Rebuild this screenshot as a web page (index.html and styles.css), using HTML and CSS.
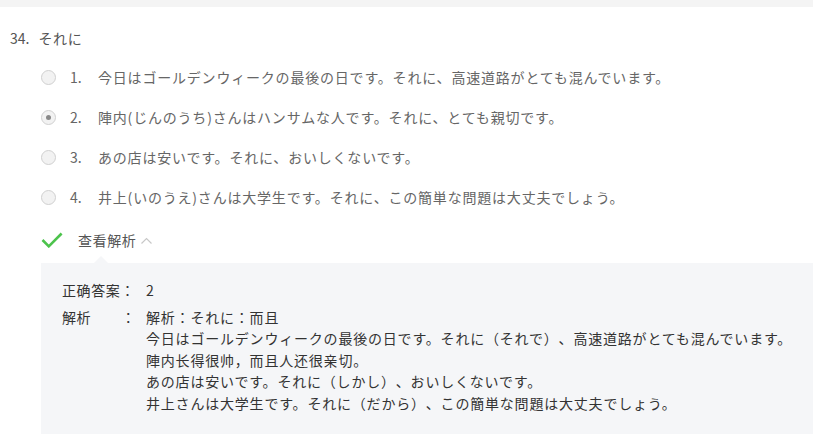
FILE: index.html
```html
<!DOCTYPE html>
<html lang="ja">
<head>
  <meta charset="UTF-8">
  <meta name="viewport" content="width=device-width, initial-scale=1.0">
  <title>それに</title>
  <link rel="stylesheet" href="styles.css">
</head>
<body>
  <div class="top-bar"></div>

  <div class="question">
    <div class="question-title"><span class="question-no">34.</span><span class="question-word">それに</span></div>

    <ul class="options">
      <li class="option">
        <span class="radio"></span>
        <span class="option-no">1.</span>
        <span class="option-text">今日はゴールデンウィークの最後の日です。それに、高速道路がとても混んでいます。</span>
      </li>
      <li class="option">
        <span class="radio checked"></span>
        <span class="option-no">2.</span>
        <span class="option-text">陣内(じんのうち)さんはハンサムな人です。それに、とても親切です。</span>
      </li>
      <li class="option">
        <span class="radio"></span>
        <span class="option-no">3.</span>
        <span class="option-text">あの店は安いです。それに、おいしくないです。</span>
      </li>
      <li class="option">
        <span class="radio"></span>
        <span class="option-no">4.</span>
        <span class="option-text">井上(いのうえ)さんは大学生です。それに、この簡単な問題は大丈夫でしょう。</span>
      </li>
    </ul>

    <div class="analysis-toggle">
      <svg class="check-icon" width="22" height="16" viewBox="0 0 22 16">
        <path d="M1.5 8 L7.8 14.3 L20.6 1.5" fill="none" stroke="#4cc34c" stroke-width="2.6"/>
      </svg>
      <span class="toggle-label">查看解析</span>
      <svg class="chevron" width="11" height="7" viewBox="0 0 11 7">
        <path d="M0.5 6.5 L5.5 1.5 L10.5 6.5" fill="none" stroke="#c8c8c8" stroke-width="1.2"/>
      </svg>
    </div>

    <div class="analysis">
      <div class="analysis-row">
        <span class="analysis-key">正确答案：</span>
        <span class="analysis-value">2</span>
      </div>
      <div class="analysis-row">
        <span class="analysis-key">解析<span class="colon">：</span></span>
        <div class="analysis-value">
          解析：それに：而且<br>
          今日はゴールデンウィークの最後の日です。それに（それで）、高速道路がとても混んでいます。<br>
          陣内长得很帅，而且人还很亲切。<br>
          あの店は安いです。それに（しかし）、おいしくないです。<br>
          井上さんは大学生です。それに（だから）、この簡単な問題は大丈夫でしょう。
        </div>
      </div>
    </div>
  </div>
</body>
</html>
```

FILE: styles.css
```css
body, html {
  margin: 0;
  padding: 0;
  background: #fff;
  font-family: "Noto Sans CJK SC", "Noto Sans", sans-serif;
  font-size: 14px;
  color: #333;
  text-spacing-trim: space-all;
}

.top-bar {
  height: 7px;
  background-color: #f4f4f4;
}

.question {
  padding: 20px 0 0 10px;
}

.question-title {
  color: #555;
  line-height: 22px;
}

.question-word {
  margin-left: 9px;
  letter-spacing: 0.6px;
}

.options {
  list-style: none;
  margin: 0;
  padding: 8px 0 0 31px;
}

.option {
  display: flex;
  align-items: center;
  height: 40px;
  color: #666;
}

.option-text {
  letter-spacing: 0.8px;
}

.radio {
  box-sizing: border-box;
  width: 15px;
  height: 15px;
  border: 1px solid #d0d0d0;
  border-radius: 50%;
  background-color: #f2f2f2;
  display: flex;
  align-items: center;
  justify-content: center;
}

.radio.checked::after {
  content: "";
  width: 5px;
  height: 5px;
  border-radius: 50%;
  background-color: #888;
}

.option-no {
  margin-left: 14px;
  width: 28px;
}

.analysis-toggle {
  display: flex;
  align-items: center;
  height: 46px;
  padding-left: 31px;
  color: #555;
}

.check-icon {
  margin-right: 15px;
}

.toggle-label {
  letter-spacing: 0.6px;
}

.chevron {
  margin-left: 5px;
}

.analysis {
  position: relative;
  margin-left: 31px;
  background-color: #f5f6f8;
  padding: 17px 0 16px 21px;
  line-height: 21.5px;
  color: #333;
}

.analysis::before {
  content: "";
  position: absolute;
  top: -7px;
  left: 53px;
  border-left: 7px solid transparent;
  border-right: 7px solid transparent;
  border-bottom: 7px solid #f5f6f8;
}

.analysis-row {
  display: flex;
  margin-bottom: 5px;
}

.analysis-key {
  width: 84px;
  flex-shrink: 0;
  letter-spacing: 0.6px;
}

.analysis-value {
  letter-spacing: 0.8px;
}

.colon {
  margin-left: 30px;
}
```
